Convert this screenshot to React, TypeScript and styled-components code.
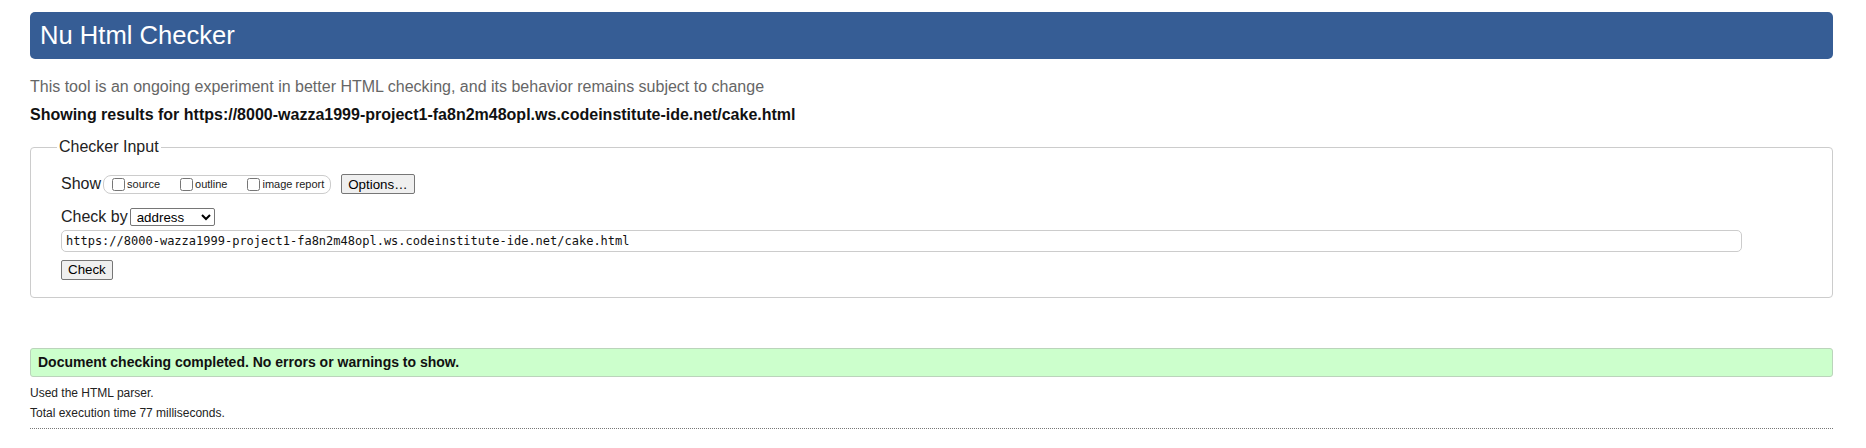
import React from "react";
import styled, { createGlobalStyle } from "styled-components";

const GlobalStyle = createGlobalStyle`
  html, body {
    margin: 0;
    padding: 0;
    background: #ffffff;
  }
  body {
    font-family: "Liberation Sans", Arial, Helvetica, sans-serif;
    color: #000;
  }
`;

const Page = styled.div`
  padding: 12px 33px 0 30px;
  display: flex;
  flex-direction: column;
`;

const Header = styled.h1`
  margin: 0;
  height: 47px;
  box-sizing: border-box;
  background: #365d95;
  color: #ffffff;
  border-radius: 5px;
  font-weight: normal;
  font-size: 25.6px;
  padding: 0 10px;
  display: flex;
  align-items: center;
`;

const Intro = styled.p`
  margin: 19px 0 0;
  font-size: 16px;
  line-height: 18px;
  color: #666;
`;

const Results = styled.p`
  margin: 10px 0 0;
  font-size: 16px;
  line-height: 18px;
  font-weight: bold;
  color: #111;
`;

const Fieldset = styled.fieldset`
  margin: 14px 0 0;
  border: 1px solid #ccc;
  border-radius: 4px;
  padding: 18px 30px 17px 30px;
  min-width: 0;
`;

const Legend = styled.legend`
  font-size: 16px;
  line-height: 18px;
  padding: 0 2px;
  margin-left: -4px;
  color: #222;
`;

const Row = styled.div<{ $top?: number }>`
  display: flex;
  align-items: center;
  margin-top: ${(p) => p.$top ?? 0}px;
`;

const Label = styled.span`
  font-size: 16px;
  line-height: 18px;
  color: #222;
`;

const CheckGroup = styled.span`
  display: inline-flex;
  align-items: center;
  gap: 20px;
  height: 19px;
  box-sizing: border-box;
  border: 1px solid #ccc;
  border-radius: 8px;
  padding: 0 6px 0 8px;
  margin: 0 10px 0 2px;
`;

const Option = styled.label`
  display: inline-flex;
  align-items: center;
  font-size: 11px;
  color: #222;
`;

const Box = styled.input`
  margin: 0 2px 0 0;
  width: 13px;
  height: 13px;
`;

const Button = styled.button`
  font-family: "Liberation Sans", Arial, sans-serif;
  font-size: 13.33px;
  height: 20px;
  padding: 0 6px;
  border: 1px solid #767676;
  border-radius: 2px;
  background: #efefef;
  color: #000;
`;

const Select = styled.select`
  font-family: "Liberation Sans", Arial, sans-serif;
  font-size: 13.33px;
  width: 85px;
  height: 18px;
  margin-left: 2px;
  border: 1px solid #767676;
  border-radius: 2px;
  background: #fff;
  color: #000;
  padding: 0 2px;
`;

const UrlInput = styled.input`
  display: block;
  box-sizing: border-box;
  width: calc(100% - 60px);
  height: 22px;
  margin-top: 3.5px;
  border: 1px solid #ccc;
  border-radius: 5px;
  padding: 0 4px;
  font-family: "DejaVu Sans Mono", "Liberation Mono", monospace;
  font-size: 12px;
  color: #111;
`;

const CheckRow = styled.div`
  margin-top: 8px;
  display: flex;
`;

const Success = styled.div`
  margin-top: 50px;
  height: 29px;
  box-sizing: border-box;
  background: #ccffcc;
  border: 1px solid #bbd4bb;
  border-radius: 3px;
  padding: 0 7px;
  display: flex;
  align-items: center;
  font-size: 14px;
  font-weight: bold;
  color: #111;
`;

const Details = styled.div`
  margin-top: 6px;
  display: flex;
  flex-direction: column;
`;

const Note = styled.p`
  margin: 0;
  font-size: 12px;
  line-height: 20px;
  color: #222;
`;

const Rule = styled.hr`
  margin: 5px 0 0;
  border: 0;
  border-top: 1px dotted #777;
  height: 0;
`;

const url = "https://8000-wazza1999-project1-fa8n2m48opl.ws.codeinstitute-ide.net/cake.html";

export default function App() {
  return (
    <>
      <GlobalStyle />
      <Page>
        <Header>Nu Html Checker</Header>
        <Intro>
          This tool is an ongoing experiment in better HTML checking, and its behavior remains subject to change
        </Intro>
        <Results>Showing results for {url}</Results>
        <Fieldset>
          <Legend>Checker Input</Legend>
          <Row>
            <Label>Show</Label>
            <CheckGroup>
              <Option>
                <Box type="checkbox" />
                source
              </Option>
              <Option>
                <Box type="checkbox" />
                outline
              </Option>
              <Option>
                <Box type="checkbox" />
                image report
              </Option>
            </CheckGroup>
            <Button type="button">Options…</Button>
          </Row>
          <Row $top={14}>
            <Label>Check by</Label>
            <Select defaultValue="address">
              <option value="address">address</option>
              <option value="file">file upload</option>
              <option value="text">text input</option>
            </Select>
          </Row>
          <UrlInput type="url" defaultValue={url} />
          <CheckRow>
            <Button type="button">Check</Button>
          </CheckRow>
        </Fieldset>
        <Success>Document checking completed. No errors or warnings to show.</Success>
        <Details>
          <Note>Used the HTML parser.</Note>
          <Note>Total execution time 77 milliseconds.</Note>
        </Details>
        <Rule />
      </Page>
    </>
  );
}
